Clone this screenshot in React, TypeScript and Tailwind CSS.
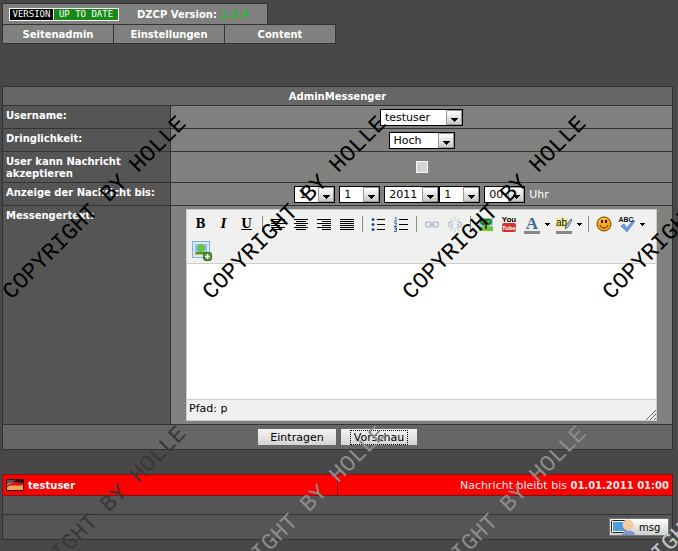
import type { ReactNode } from 'react';

type TSelectProps = {
  label: string;
  value: string;
  className: string;
};

const Select = ({ label, value, className }: TSelectProps) => (
  <span className={`relative inline-flex h-[17px] border border-black bg-white ${className}`}>
    <select
      aria-label={label}
      defaultValue={value}
      className="w-full appearance-none bg-white pl-1 text-[11px] leading-[15px] text-black outline-none"
    >
      <option>{value}</option>
    </select>
    <span className="pointer-events-none absolute inset-y-0 right-0 flex w-4 items-center justify-center border border-[#999] bg-linear-to-b from-white to-[#c8c8c8]">
      <svg width="8" height="11" viewBox="0 0 8 11" shapeRendering="crispEdges">
        <path d="M0 6h8L4 10z" fill="#000" />
      </svg>
    </span>
  </span>
);

type TToolProps = {
  title: string;
  children: ReactNode;
};

const Tool = ({ title, children }: TToolProps) => (
  <button type="button" title={title} aria-label={title} className="flex h-6 w-[23px] items-center justify-center">
    <svg width="20" height="20" viewBox="0 0 20 20">
      {children}
    </svg>
  </button>
);

const Arrow = ({ title }: { title: string }) => (
  <button type="button" aria-label={title} className="flex h-6 w-[9px] items-center justify-center">
    <svg width="5" height="3" viewBox="0 0 5 3" shapeRendering="crispEdges">
      <path d="M0 0h5v1H0zM1 1h3v1H1zM2 2h1v1H2z" />
    </svg>
  </button>
);

const Separator = () => (
  <span className="flex h-6 w-2 items-center justify-center">
    <span className="h-4 w-px bg-[#888]" />
  </span>
);

const Lines = ({ d }: { d: string }) => (
  <path d={d} stroke="#000" shapeRendering="crispEdges" />
);

const letterButton = "h-6 w-[23px] font-['DejaVu_Serif',serif] text-[12px] leading-6 font-bold";

const Toolbar = () => (
  <div className="flex flex-wrap content-start gap-y-0.5 border-b border-[#ccc] bg-[#f0f0ee] pt-0.5 pb-px pl-0.5">
    <button type="button" title="Fett" className={letterButton}>B</button>
    <button type="button" title="Kursiv" className={`${letterButton} italic`}>I</button>
    <button type="button" title="Unterstrichen" className={`${letterButton} underline`}>U</button>
    <Separator />
    <Tool title="Links">
      <Lines d="M3 5.5h14M3 7.5h9M3 9.5h14M3 11.5h9M3 13.5h14M3 15.5h9" />
    </Tool>
    <Tool title="Zentriert">
      <Lines d="M3 5.5h14M5 7.5h10M3 9.5h14M5 11.5h10M3 13.5h14M5 15.5h10" />
    </Tool>
    <Tool title="Rechts">
      <Lines d="M3 5.5h14M8 7.5h9M3 9.5h14M8 11.5h9M3 13.5h14M8 15.5h9" />
    </Tool>
    <Tool title="Blocksatz">
      <Lines d="M3 5.5h14M3 7.5h14M3 9.5h14M3 11.5h14M3 13.5h14M3 15.5h14" />
    </Tool>
    <Separator />
    <Tool title="Liste">
      <Lines d="M9 5.5h8M9 10.5h8M9 15.5h8" />
      <circle cx="5" cy="5.500" r="1.500" fill="#2b4f94" />
      <circle cx="5" cy="10.500" r="1.500" fill="#2b4f94" />
      <circle cx="5" cy="15.500" r="1.500" fill="#2b4f94" />
    </Tool>
    <Tool title="Nummerierte Liste">
      <Lines d="M8 5.500h9M8 10.500h9M8 15.500h9" />
      <path
        d="M4 3.500h1v3M3 7h3M3 9h2.500v1.500L3 12.500h3M3 14h2.500v3.500H3M4 15.500h1.500"
        stroke="#3c62ae"
        fill="none"
      />
    </Tool>
    <Separator />
    <Tool title="Link">
      <g fill="none" stroke="#b9c4d3" strokeWidth="1.5">
        <rect x="3.500" y="8" width="6" height="5" rx="2.500" />
        <rect x="10.500" y="8" width="6" height="5" rx="2.500" />
        <path d="M7 10.500h6" />
      </g>
    </Tool>
    <Tool title="Link entfernen">
      <g fill="none" stroke="#b9c4d3" strokeWidth="1.500">
        <path d="M8 8H6a2.500 2.500 0 0 0 0 5h2M12 8h2a2.500 2.500 0 0 1 0 5h-2M6 10.500h2M12 10.500h2" />
        <path d="M10 3v4M5 4l3 3M15 4l-3 3M10 14v4M5 17l3-3M15 17l-3-3" strokeWidth="1" stroke="#c2c8d2" />
      </g>
    </Tool>
    <Separator />
    <Tool title="Bild">
      <rect x="3" y="4" width="14" height="13" fill="#9ccdf5" />
      <path d="M3 13l6-1 8 1v4H3z" fill="#6cc92c" />
      <path d="M9 10h2v5H9z" fill="#5b3510" />
      <path d="M4 8c0-3 3-4 5-3 3-1 8 0 7 3 0 2-3 4-5 3-3 1-7 0-7-3z" fill="#1f7f16" />
      <path d="M6 8l3-2M11 8l3-1M9 10l2-1" stroke="#8fd84a" />
    </Tool>
    <Tool title="YouTube">
      <text
        x="10"
        y="8"
        textAnchor="middle"
        fontSize="8"
        fontWeight="700"
        fontFamily="Liberation Sans Narrow, Liberation Sans, sans-serif"
      >
        You
      </text>
      <rect x="3" y="9" width="14" height="9" rx="2" fill="#d8322f" />
      <text
        x="10"
        y="16"
        textAnchor="middle"
        fontSize="6"
        fontWeight="700"
        fill="#fff"
        fontFamily="Liberation Sans Narrow, Liberation Sans, sans-serif"
      >
        Tube
      </text>
    </Tool>
    <Tool title="Textfarbe">
      <text
        x="10"
        y="15"
        textAnchor="middle"
        fontSize="17"
        fontWeight="700"
        fill="#3f66a0"
        fontFamily="Liberation Serif, serif"
      >
        A
      </text>
      <rect x="2" y="17" width="16" height="3" fill="#888" />
    </Tool>
    <Arrow title="Textfarbe wählen" />
    <Tool title="Hintergrundfarbe">
      <rect x="2" y="4" width="12" height="10" fill="#f4ee94" />
      <text x="2" y="12" fontSize="10" fill="#111" fontFamily="Liberation Sans, sans-serif">
        ab
      </text>
      <path d="M17 5l-5 7-1 3 3-2 4-7z" fill="#c5d5ec" stroke="#5b6a80" />
      <rect x="2" y="17" width="16" height="3" fill="#888" />
    </Tool>
    <Arrow title="Hintergrundfarbe wählen" />
    <Separator />
    <Tool title="Smilies">
      <circle cx="10" cy="10" r="7" fill="#fba919" stroke="#6b3c05" />
      <path d="M5 8c1-3 4-4 7-3" stroke="#ffe08a" fill="none" />
      <path d="M7 6h2v3H7zM11 6h2v3h-2z" fill="#3a1d00" />
      <path d="M6 11c1 4 7 4 8 0" stroke="#3a1d00" fill="none" />
    </Tool>
    <Tool title="Rechtschreibung">
      <path d="M4 12l3-2 3 4 6-8 2 1-8 11z" fill="#6f9ce4" stroke="#3158a8" strokeWidth=".5" />
      <text
        x="9"
        y="8"
        textAnchor="middle"
        fontSize="7"
        fontWeight="700"
        fill="#111"
        fontFamily="Liberation Sans, sans-serif"
      >
        ABC
      </text>
    </Tool>
    <Arrow title="Sprache wählen" />
    <button type="button" title="Bild hochladen" className="flex h-6 w-[25px] items-center justify-center">
      <svg width="21" height="21" viewBox="0 0 21 21">
        <rect x="1.500" y="1.500" width="17" height="16" fill="#d8e9f8" stroke="#86aed6" />
        <rect x="4" y="4" width="12" height="11" fill="#8fc0ee" />
        <path d="M4 12h12v3H4z" fill="#d7b451" />
        <path d="M5 12h9v2H5z" fill="#4a9633" />
        <circle cx="10" cy="8" r="4" fill="#6cc244" />
        <rect x="12.500" y="12.500" width="8" height="8" rx="2" fill="#4f9436" stroke="#2f6a1d" />
        <path d="M16.500 14v5M14 16.500h5" stroke="#fff" strokeWidth="1.500" />
      </svg>
    </button>
  </div>
);

const Editor = () => (
  <div className="mx-[15px] border border-[#ccc] bg-white text-left text-black">
    <Toolbar />
    <textarea aria-label="Messengertext" className="block h-[135px] w-full resize-none bg-white p-2 outline-none" />
    <div className="flex h-[21px] items-end justify-between border-t border-[#ccc] bg-[#f0f0ee] pl-0.5">
      <span className="self-start pt-0.5">Pfad: p</span>
      <svg width="11" height="11" viewBox="0 0 11 11">
        <path d="M1 11L11 1M5 11l6-6M9 11l2-2" stroke="#666" />
      </svg>
    </div>
  </div>
);

const marks = [
  'left-[7px] top-[284px] text-black',
  'left-[207px] top-[284px] text-black',
  'left-[407px] top-[284px] text-black',
  'left-[607px] top-[284px] text-black',
  'left-[7px] top-[594px] text-[#383838]',
  'left-[207px] top-[594px] text-[#8c8c8c]',
  'left-[407px] top-[594px] text-[#8c8c8c]',
  'left-[607px] top-[594px] text-[#c4c4c4]',
];

const Watermark = () => (
  <div aria-hidden="true" className="pointer-events-none absolute inset-0 overflow-hidden">
    {marks.map((mark) => (
      <span
        key={mark}
        className={`absolute origin-left -rotate-45 font-['Liberation_Mono',monospace] text-[23px] leading-6 whitespace-nowrap ${mark}`}
      >
        COPYRIGHT BY HOLLE
      </span>
    ))}
  </div>
);

const labelCell =
  'border border-[#333] bg-[#555] px-[3px] pt-1 text-left align-top text-[10px] leading-3 font-bold';
const fieldCell = 'border border-[#333] bg-[#80807e] text-center align-middle';

const App = () => {
  return (
    <main className="relative min-h-screen overflow-hidden bg-[#484848] pt-[3px] pr-[5px] pl-[2px] font-['DejaVu_Sans',Verdana,sans-serif] text-[11px] leading-[13px] text-white">
      <header className="text-[10px] font-bold">
        <div className="flex h-[21px] w-[266px] items-center border border-b-0 border-[#333] bg-[#80807e] pl-[6px]">
          <span className="flex h-[13px] items-center border border-white bg-black font-['DejaVu_Sans_Mono',monospace] text-[9px] leading-[11px] font-normal">
            <span className="w-[43px] text-center">VERSION</span>
            <span className="w-[65px] border-l border-white bg-[#178a17] text-center">UP TO DATE</span>
          </span>
          <span className="pl-[18px]">
            DZCP Version: <span className="text-[#28b83a]">1.5.4</span>
          </span>
        </div>
        <nav className="flex h-5 w-[334px] divide-x divide-[#333] border border-[#333] bg-[#80807e] text-center leading-[19px]">
          <a href="#seitenadmin" className="flex-1">Seitenadmin</a>
          <a href="#einstellungen" className="flex-1">Einstellungen</a>
          <a href="#content" className="flex-1">Content</a>
        </nav>
      </header>

      <form className="mt-[42px]">
        <table className="w-full border-collapse">
          <thead>
            <tr className="h-[19px]">
              <th colSpan={2} className="border border-[#333] bg-[#666] text-[10px] font-bold">AdminMessenger</th>
            </tr>
          </thead>
          <tbody>
            <tr className="h-[23px]">
              <th className={`${labelCell} w-[168px]`}>Username:</th>
              <td className={fieldCell}>
                <div className="flex justify-center">
                  <Select label="Username" value="testuser" className="w-[83px]" />
                </div>
              </td>
            </tr>
            <tr className="h-[23px]">
              <th className={labelCell}>Dringlichkeit:</th>
              <td className={fieldCell}>
                <div className="flex justify-center">
                  <Select label="Dringlichkeit" value="Hoch" className="w-[66px]" />
                </div>
              </td>
            </tr>
            <tr className="h-[31px]">
              <th className={labelCell}>
                <label htmlFor="akzeptieren" className="block w-32">User kann Nachricht akzeptieren</label>
              </th>
              <td className={fieldCell}>
                <input
                  id="akzeptieren"
                  type="checkbox"
                  className="mx-auto block size-3 appearance-none border border-[#f4f4f4] bg-[#d4d4d4]"
                />
              </td>
            </tr>
            <tr className="h-[23px]">
              <th className={labelCell}>Anzeige der Nachricht bis:</th>
              <td className={fieldCell}>
                <div className="flex items-center justify-center">
                  <Select label="Tag" value="1" className="mr-1 w-[41px]" />
                  <Select label="Monat" value="1" className="mr-1 w-[41px]" />
                  <Select label="Jahr" value="2011" className="w-[55px]" />
                  <Select label="Stunde" value="1" className="mr-1 w-[41px]" />
                  <Select label="Minute" value="00" className="mr-1 w-[41px]" />
                  Uhr
                </div>
              </td>
            </tr>
            <tr className="h-[219px]">
              <th className={labelCell}>Messengertext:</th>
              <td className={fieldCell}>
                <Editor />
              </td>
            </tr>
            <tr className="h-[25px]">
              <td colSpan={2} className="border border-[#333] bg-[#666]">
                <div className="flex justify-center gap-[5px]">
                  <button type="button" className="h-4 w-[78px] bg-linear-to-b from-[#f4f4f4] to-[#d4d4d4] text-black">
                    Eintragen
                  </button>
                  <button type="button" className="h-4 w-[76px] bg-linear-to-b from-[#f4f4f4] to-[#d4d4d4] text-black">
                    <span className="mx-auto block w-14 outline-1 outline-black outline-dotted">Vorschau</span>
                  </button>
                </div>
              </td>
            </tr>
          </tbody>
        </table>
      </form>

      <table className="mt-6 w-full border-collapse">
        <tbody>
          <tr className="h-[21px]">
            <td className="w-1/2 border border-[#7a1512] bg-[#f00] px-[3px] text-[10px] font-bold">
              <span className="flex items-center gap-1">
                <svg width="18" height="12" viewBox="0 0 18 12">
                  <rect width="18" height="12" fill="#1c0a08" />
                  <path d="M1 5c4-3 12-2 16-1v3H1z" fill="#d4171e" />
                  <path d="M1 8c5-3 11 0 16-2v5H1z" fill="#f0a350" />
                  <path d="M1 1h9L1 7z" fill="#fff" opacity=".3" />
                </svg>
                testuser
              </span>
            </td>
            <td className="border border-[#7a1512] bg-[#f00] px-[3px] text-right text-[#eee]">
              Nachricht bleibt bis <b className="text-[10px]">01.01.2011 01:00</b>
            </td>
          </tr>
          <tr className="h-[19px]">
            <td colSpan={2} className="border border-[#333] bg-[#555]" />
          </tr>
          <tr className="h-[25px]">
            <td colSpan={2} className="border border-[#333] bg-[#555] px-[3px]">
              <button
                type="button"
                className="ml-auto flex h-[18px] w-[60px] items-center gap-1 border border-[#777] bg-linear-to-b from-white to-[#cfcfcf] text-[10px] text-black"
              >
                <svg width="25" height="16" viewBox="0 0 25 16">
                  <rect x="1.500" y="1.500" width="14" height="12" rx="1" fill="#fff" stroke="#222" />
                  <rect x="3" y="3" width="12" height="9" fill="#4d9be0" />
                  <path d="M12 16c0-6 13-6 13 0z" fill="#7f97cf" />
                  <circle cx="18" cy="6" r="5.500" fill="#f2c9a2" />
                </svg>
                msg
              </button>
            </td>
          </tr>
        </tbody>
      </table>

      <Watermark />
    </main>
  );
};

export default App;
